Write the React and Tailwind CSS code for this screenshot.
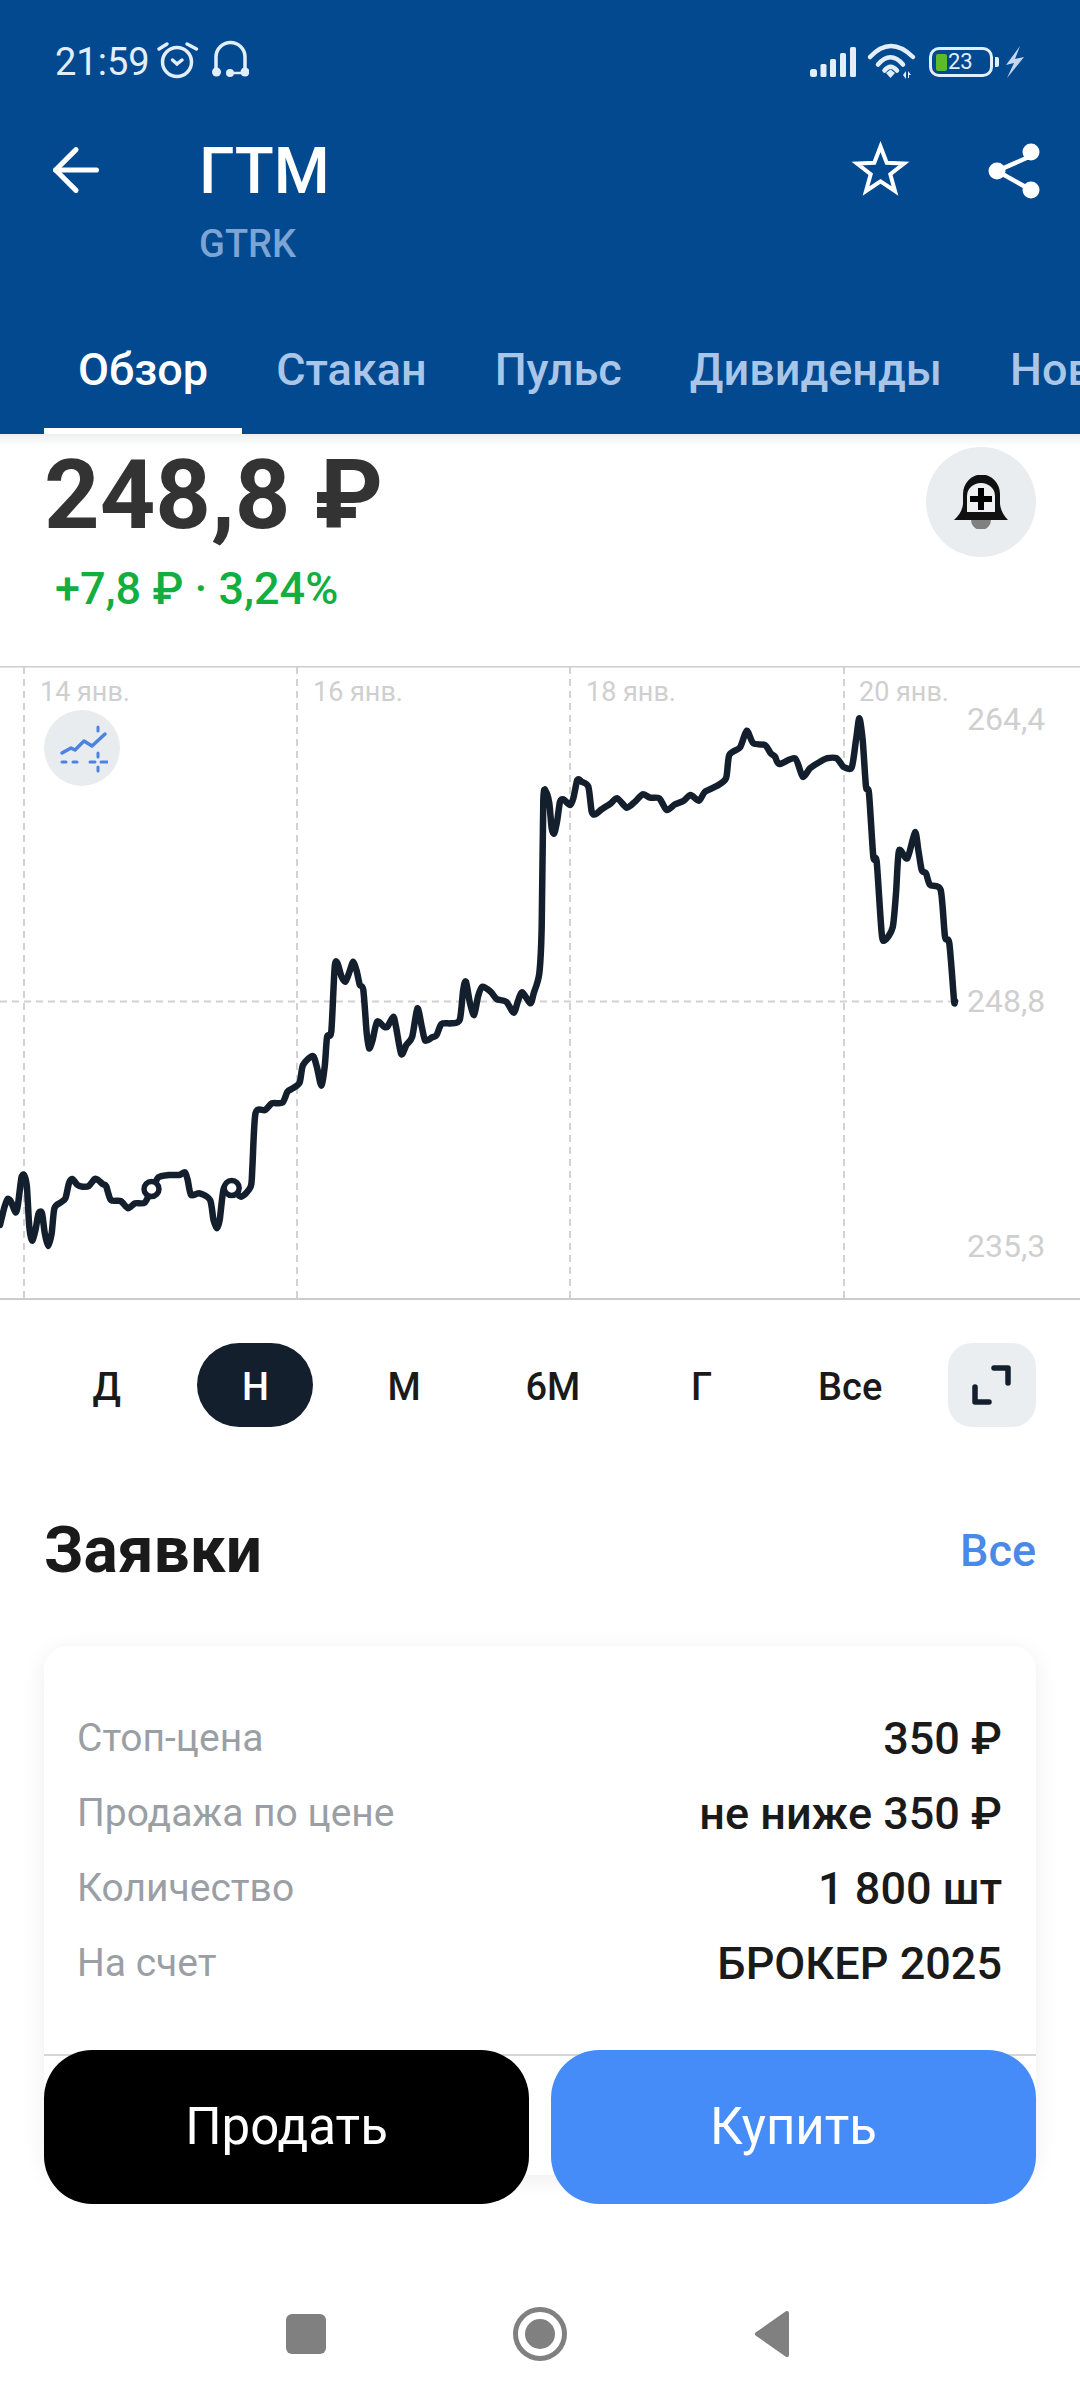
import { ArrowLeft } from "lucide-react";

/* chart points as read from the reference, page coordinates */
const leftRaw = [
  [0,1275],[12,1225],[22,1197],[32,1205],[45,1237],[52,1215],[62,1135],[70,1125],[78,1160],[85,1280],[93,1322],[103,1290],[112,1240],[122,1240],[130,1300],[140,1338],[150,1300],[158,1225],[175,1208],[190,1195],[200,1150],[210,1137],[225,1155],[240,1160],[258,1158],[275,1137],[285,1140],[298,1152],[308,1158],[322,1200],[350,1203],[372,1225],[392,1210],[420,1208],[440,1170],[460,1132],[490,1125],[520,1125],[537,1117],[545,1140],[555,1185],[580,1180],[610,1200],[620,1260],[630,1285],[638,1260],[650,1165],[673,1165],[700,1190],[728,1160],[733,1100],[742,940],[770,930],[790,910],[820,908],[835,875],[850,865],[870,848],[880,795],[908,768],[920,800],[933,857],[943,800],[950,710],[962,695],[972,500],[980,490],[992,530],[1003,545],[1015,515],[1025,485],[1035,510],[1045,555],[1055,570],[1065,700],[1072,745],[1082,720],[1095,665],[1115,680],[1125,680],[1142,650],[1150,680],[1165,762],[1180,735],[1197,710],[1212,625],[1225,680],[1235,722],[1255,712],[1268,705],[1282,672],[1310,670],[1335,660],[1345,570],[1353,545],[1365,610],[1377,645],[1388,590],[1400,560],[1425,575],[1442,597],[1470,605],[1492,638],[1505,600],[1517,577],[1540,610],[1550,580],
];
const rightRaw = [
  [118,940],[125,800],[130,420],[138,395],[148,430],[155,505],[163,520],[172,480],[180,425],[190,418],[210,435],[220,415],[232,360],[245,365],[265,380],[275,455],[285,463],[305,448],[330,432],[352,415],[380,443],[405,425],[428,403],[450,413],[478,415],[500,450],[525,433],[550,423],[572,405],[597,422],[615,395],[650,378],[678,355],[688,285],[720,262],[740,212],[760,250],[795,255],[812,280],[825,290],[838,312],[885,295],[908,350],[930,325],[960,305],[980,295],[1010,295],[1030,320],[1055,322],[1068,240],[1078,175],[1088,240],[1098,380],[1107,400],[1120,590],[1130,605],[1145,820],[1155,840],[1178,802],[1188,700],[1197,572],[1222,595],[1245,517],[1255,570],[1265,630],[1278,640],[1290,675],[1322,690],[1335,830],[1348,850],[1362,1020],
];
const chartPoints = [
  ...leftRaw.map(([x, y]) => [x / 2.904, 800 + y / 3]),
  ...rightRaw.map(([x, y]) => [500 + x / 3, 660 + y / 3]),
  [955, 1001],
];

function smoothPath(pts) {
  let d = `M${pts[0][0].toFixed(1)} ${pts[0][1].toFixed(1)}`;
  for (let i = 0; i < pts.length - 1; i++) {
    const p0 = pts[i - 1] || pts[i];
    const p1 = pts[i];
    const p2 = pts[i + 1];
    const p3 = pts[i + 2] || p2;
    const k = 1 / 8;
    d += `C${(p1[0] + (p2[0] - p0[0]) * k).toFixed(1)} ${(p1[1] + (p2[1] - p0[1]) * k).toFixed(1)} ${(p2[0] - (p3[0] - p1[0]) * k).toFixed(1)} ${(p2[1] - (p3[1] - p1[1]) * k).toFixed(1)} ${p2[0].toFixed(1)} ${p2[1].toFixed(1)}`;
  }
  return d;
}

const tabs = ["Обзор", "Стакан", "Пульс", "Дивиденды", "Новости"];
const ranges = ["Д", "Н", "М", "6М", "Г", "Все"];
const rows = [
  ["Стоп-цена", "350 ₽"],
  ["Продажа по цене", "не ниже 350 ₽"],
  ["Количество", "1 800 шт"],
  ["На счет", "БРОКЕР 2025"],
];
const dates = [
  ["14 янв.", "left-[40px]"],
  ["16 янв.", "left-[313px]"],
  ["18 янв.", "left-[586px]"],
  ["20 янв.", "left-[859px]"],
];

export default function App() {
  return (
    <div className="relative flex h-[2400px] w-[1080px] flex-col overflow-hidden bg-white font-[Roboto,sans-serif]">
      {/* ── Header ─────────────────────────── */}
      <header className="h-[434px] shrink-0 bg-[#02498f]">
        <StatusBar />
        <div className="flex h-[180px] items-start pl-[41px] pr-[40px]">
          <ArrowLeft size={70} strokeWidth={1.75} className="mt-[11px] shrink-0 text-white" />
          <div className="ml-[88px] mt-[16px]">
            <div className="text-[64px] font-medium leading-[64px] text-white">ГТМ</div>
            <div className="mt-[21px] text-[38px] font-medium leading-[38px] text-[#7ca4d4]">GTRK</div>
          </div>
          <div className="ml-auto flex items-start">
            <StarIcon />
            <ShareIcon />
          </div>
        </div>
        <nav className="flex h-[130px] overflow-hidden pl-[44px]">
          {tabs.map((t, i) => (
            <div
              key={t}
              className={
                i === 0
                  ? "flex h-full shrink-0 items-center border-b-[6px] border-white px-[34px] pt-[8px] text-[45px] font-medium text-white"
                  : "flex h-full shrink-0 items-center px-[34px] pt-[2px] text-[45px] font-medium text-[#a9c6e9]"
              }
            >
              {t}
            </div>
          ))}
        </nav>
      </header>
      <div className="h-[12px] shrink-0 bg-gradient-to-b from-[#eceef0] to-white" />

      {/* ── Price ──────────────────────────── */}
      <section className="relative h-[220px] shrink-0 pl-[44px]">
        <div className="pt-[1px] text-[97px] font-bold leading-[96px] text-[#333333]">248,8 ₽</div>
        <div className="ml-[11px] mt-[21px] text-[45px] font-medium leading-[50px] text-[#12ae3f]">+7,8 ₽ · 3,24%</div>
        <button className="absolute right-[44px] top-[1px] flex h-[110px] w-[110px] items-center justify-center rounded-full bg-[#eaedef]">
          <BellIcon />
        </button>
      </section>

      {/* ── Chart ──────────────────────────── */}
      <section className="relative h-[634px] shrink-0">
        <ChartCanvas />
        {dates.map(([d, pos]) => (
          <span key={d} className={`absolute top-[10px] text-[27px] leading-[32px] text-[#cfcfcf] ${pos}`}>
            {d}
          </span>
        ))}
        <span className="absolute left-[967px] top-[35px] text-[32px] leading-[36px] text-[#cfcfcf]">264,4</span>
        <span className="absolute left-[967px] top-[317px] text-[32px] leading-[36px] text-[#cfcfcf]">248,8</span>
        <span className="absolute left-[967px] top-[562px] text-[32px] leading-[36px] text-[#cfcfcf]">235,3</span>
        <div className="absolute left-[44px] top-[44px] flex h-[76px] w-[76px] items-center justify-center rounded-full bg-[#e9ecef]">
          <IndicatorIcon />
        </div>
      </section>

      {/* ── Range selector ─────────────────── */}
      <section className="mt-[43px] flex h-[84px] shrink-0 items-center pl-[32.5px] pr-[44px]">
        <div className="grid w-[892px] grid-cols-6">
          {ranges.map((r) => (
            <div key={r} className="flex justify-center">
              <span
                className={
                  r === "Н"
                    ? "flex h-[84px] w-[116px] items-center justify-center rounded-full bg-[#141f2e] pt-[4px] text-[38px] font-medium text-white"
                    : "flex h-[84px] items-center justify-center pt-[4px] text-[38px] font-medium text-[#1a1a1a]"
                }
              >
                {r}
              </span>
            </div>
          ))}
        </div>
        <button className="ml-auto flex h-[84px] w-[88px] items-center justify-center rounded-[24px] bg-[#ebeef0]">
          <ExpandIcon />
        </button>
      </section>

      {/* ── Orders ─────────────────────────── */}
      <section className="mt-[89px] flex items-center justify-between px-[44px]">
        <h2 className="text-[64px] font-bold leading-[70px] text-[#1a1a1a]">Заявки</h2>
        <span className="text-[45px] font-medium leading-[50px] text-[#4a8ae6]">Все</span>
      </section>

      <div className="mx-[44px] mt-[60px] h-[529px] shrink-0 rounded-[24px] bg-white pt-[55px] shadow-[0_4px_24px_rgba(0,0,0,0.07)]">
        <div className="flex flex-col pl-[33px] pr-[34px]">
          {rows.map(([k, v]) => (
            <div key={k} className="flex h-[75px] items-center justify-between">
              <span className="text-[39px] text-[#9a9fa5]">{k}</span>
              <span className="text-[45px] font-medium text-[#1a1a1a]">{v}</span>
            </div>
          ))}
        </div>
        <div className="mt-[53px] h-[2px] bg-[#d6d6d6]" />
      </div>

      {/* ── Action buttons, over the card ──── */}
      <div className="absolute left-[44px] right-[44px] top-[2050px] flex gap-[22px]">
        <button className="h-[154px] flex-1 rounded-[48px] bg-black text-[51px] text-white">Продать</button>
        <button className="h-[154px] flex-1 rounded-[48px] bg-[#468cf8] text-[51px] text-white">Купить</button>
      </div>

      {/* ── Android nav bar ────────────────── */}
      <div className="absolute bottom-[41px] left-[286px] flex h-[50px] w-[504px] items-center justify-between">
        <div className="h-[40px] w-[40px] rounded-[6px] bg-[#808080]" />
        <div className="flex h-[54px] w-[54px] items-center justify-center rounded-full border-[5px] border-[#808080]">
          <div className="h-[30px] w-[30px] rounded-full bg-[#808080]" />
        </div>
        <svg width="36" height="48" viewBox="0 0 36 48">
          <path d="M33 3 L3 24 L33 45 Z" fill="#808080" stroke="#808080" strokeWidth="4" strokeLinejoin="round" />
        </svg>
      </div>
    </div>
  );
}

function StatusBar() {
  return (
    <div className="flex h-[124px] items-center pl-[55px] pr-[56px] text-[#e3eefb]">
      <span className="text-[38px] leading-[38px]">21:59</span>
      <svg className="-mt-[5px] ml-[5px]" width="94" height="42" viewBox="153 38 94 42" fill="none" stroke="currentColor" strokeWidth="3.5" strokeLinecap="round">
        <circle cx="175" cy="61" r="14.5" />
        <path d="M170.5 59 L175 63 L180 59" />
        <path d="M157 48 L165 43 M194.5 48 L185 43" />
        <path d="M214 68 V56 A14.5 14.5 0 0 1 243 56 V68" />
        <circle cx="214.5" cy="71" r="4.5" fill="currentColor" stroke="none" />
        <circle cx="243" cy="71" r="4.5" fill="currentColor" stroke="none" />
        <circle cx="228" cy="72" r="4" fill="currentColor" stroke="none" />
        <path d="M228 72 H243" strokeWidth="2.5" />
      </svg>
      <div className="ml-auto flex items-center">
        <svg width="120" height="42" viewBox="808 40 120 42" fill="currentColor">
          <rect x="812" y="68" width="7" height="8" rx="2.5" />
          <rect x="822.5" y="63" width="6" height="13" rx="1.5" />
          <rect x="832" y="58" width="6" height="18" rx="1.5" />
          <rect x="842" y="52" width="6" height="24" rx="1.5" />
          <rect x="852" y="46" width="6" height="30" rx="1.5" />
          <g fill="none" stroke="currentColor" strokeWidth="4.5" strokeLinecap="round">
            <path d="M872 56 Q892.5 34 915 56" />
            <path d="M880 63.5 Q892.5 49 905 63.5" />
            <path d="M886.5 69.5 Q892.5 62 899 69.5" />
          </g>
          <path d="M888 72 L892.5 68.5 L897 72 L892.5 77 Z" />
          <path d="M905 74 L908 70 V78 Z M910 70 L913 74 H911 V77 H910 Z" />
        </svg>
        <div className="ml-[3px] flex h-[30px] w-[64px] items-center rounded-[10px] border-[3px] border-[#e3eefb] pl-[4px]">
          <div className="h-[17px] w-[11px] rounded-[2px] bg-[#5cba2b]" />
          <span className="ml-[1px] text-[22px] leading-[22px]">23</span>
        </div>
        <div className="ml-[2px] h-[10px] w-[4px] rounded-r-[2px] bg-[#e3eefb]" />
        <svg className="ml-[7px]" width="18" height="32" viewBox="1008 45 18 32" fill="#c5d6ee">
          <path d="M1022 45 L1008 64 L1016 62 L1009 77 L1026 56 L1017 58 Z" />
        </svg>
      </div>
    </div>
  );
}

function StarIcon() {
  return (
    <svg className="mt-[17px]" width="60" height="58" viewBox="852 143 60 58" fill="none" stroke="#fff" strokeWidth="4">
      <path d="M881.5 148.5 L887.7 164.7 L905 165.5 L891.3 176.2 L896 193 L881.5 183.4 L867 193 L871.7 176.2 L858 165.5 L875.3 164.7 Z" />
    </svg>
  );
}

function ShareIcon() {
  return (
    <svg className="ml-[77px] mt-[18px]" width="52" height="58" viewBox="988 141 52 58" fill="#fff">
      <path d="M1031 155 L997 170 L1031 189" fill="none" stroke="#fff" strokeWidth="4.5" />
      <circle cx="1031" cy="151" r="8.5" />
      <circle cx="997" cy="170" r="8.5" />
      <circle cx="1031" cy="189" r="8.5" />
    </svg>
  );
}

function BellIcon() {
  return (
    <svg width="54" height="54" viewBox="954 476 54 54">
      <circle cx="981" cy="521" r="10" fill="#808080" />
      <path d="M963 505 V495 A18 19 0 0 1 1000 495 V505 Q1001 514 1008 521 H954 Q962 514 963 505 Z" fill="#111" />
      <path d="M967 513 V497 A14 13 0 0 1 995 497 V513 Z" fill="#eef0f2" />
      <path d="M978 489 H984 V497 H992 V503 H984 V511 H978 V503 H970 V497 H978 Z" fill="#000" />
    </svg>
  );
}

function IndicatorIcon() {
  return (
    <svg width="52" height="52" viewBox="54 722 52 52" fill="none" stroke="#4a84e0" strokeLinecap="round" strokeLinejoin="round">
      <path d="M60 753 L69 748 L73 750 L82 741 L90 746 L103 734" strokeWidth="3.5" />
      <path d="M60 762 H64 M71 762 H75 M88 762 H93 M99 762 H106 M96 727 V731 M96 753 V757 M96 767 V771" strokeWidth="3" />
    </svg>
  );
}

function ExpandIcon() {
  return (
    <svg width="44" height="44" viewBox="970 1364 44 44" fill="none" stroke="#141f2e" strokeWidth="5.5" strokeLinecap="round" strokeLinejoin="round">
      <path d="M994 1369 H1008 V1384" />
      <path d="M975 1388 V1403 H989" />
    </svg>
  );
}

function ChartCanvas() {
  return (
    <svg className="absolute inset-0" width="1080" height="634" viewBox="0 666 1080 634" fill="none">
      <path d="M0 666.5 H1080 M0 1299 H1080" stroke="#cccccc" strokeWidth="2" />
      <g stroke="#d2d2d2" strokeWidth="2" strokeDasharray="7 5">
        <path d="M24 667 V1299 M297 667 V1299 M570 667 V1299 M844 667 V1299" />
        <path d="M0 1001.5 H955" />
      </g>
      <path d={smoothPath(chartPoints)} stroke="#141f2e" strokeWidth="6.5" strokeLinejoin="round" strokeLinecap="round" />
      <circle cx="151.5" cy="1189" r="7.5" fill="#fff" stroke="#141f2e" strokeWidth="5.5" />
      <circle cx="231.7" cy="1188" r="7.5" fill="#fff" stroke="#141f2e" strokeWidth="5.5" />
    </svg>
  );
}
